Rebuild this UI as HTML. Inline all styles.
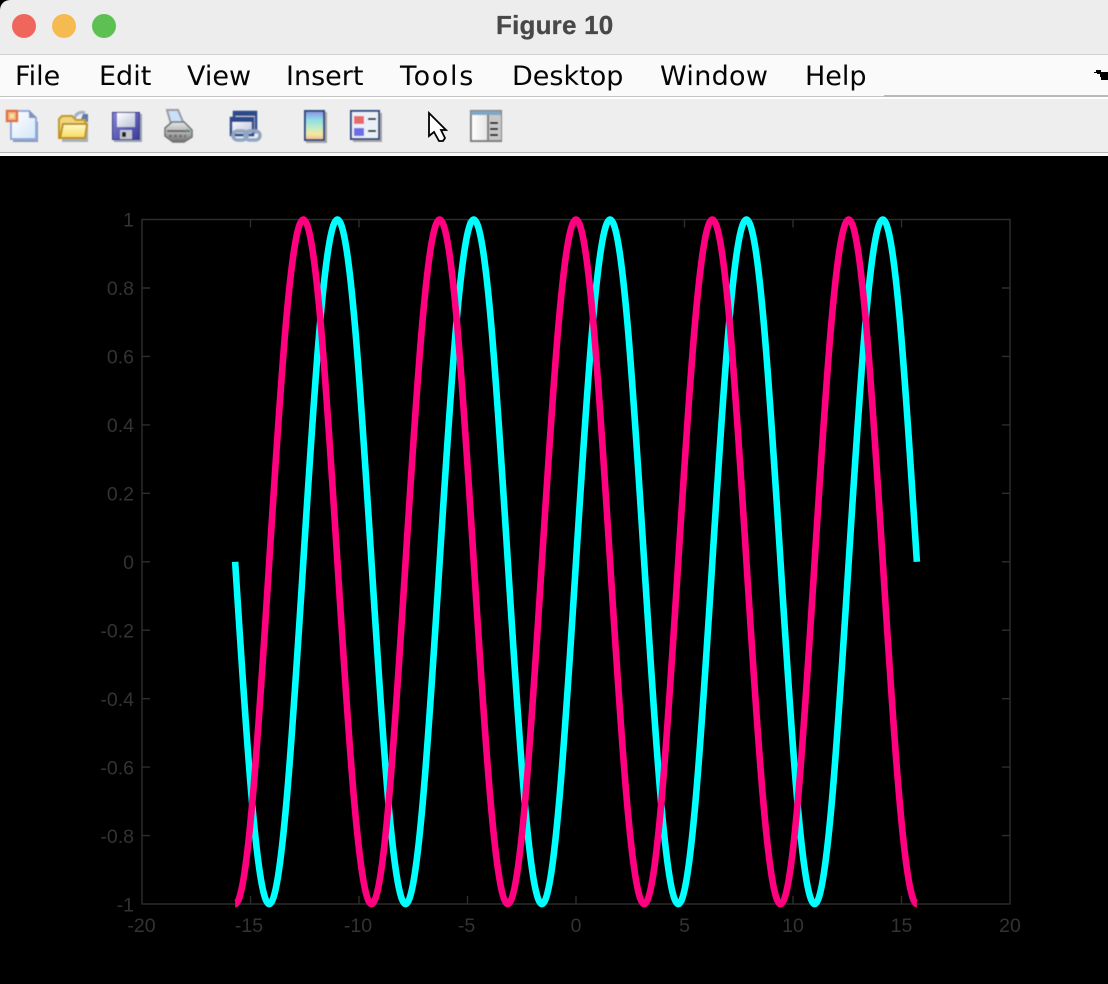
<!DOCTYPE html>
<html lang="en">
<head>
<meta charset="utf-8">
<title>Figure 10</title>
<style>
html,body{margin:0;padding:0;background:#000;}
#w{position:relative;width:1108px;height:984px;overflow:hidden;background:#000;}
#w>div{position:absolute;}
.m{position:absolute;top:59px;font:27px/36px "DejaVu Sans",sans-serif;color:#050505;white-space:nowrap;}
svg{position:absolute;left:0;top:0;}
</style>
</head>
<body>
<div id="w">
<div style="left:0;top:0;width:1108px;height:54px;background:#ecedec;border-top-left-radius:10px;"></div>
<div style="left:0;top:54px;width:1108px;height:1px;background:#cfcfcf;"></div>
<div style="left:0;top:55px;width:1108px;height:41px;background:#fafafa;"></div>
<div style="left:0;top:96px;width:1108px;height:1px;background:#c4c4c4;"></div>
<div style="left:884px;top:95px;width:224px;height:2px;background:#b8b8b8;"></div>
<div style="left:0;top:97px;width:1108px;height:2px;background:#fff;"></div>
<div style="left:0;top:99px;width:1108px;height:53px;background:#eeeeee;"></div>
<div style="left:0;top:152px;width:1108px;height:1px;background:#b4b4b4;"></div>
<div style="left:0;top:153px;width:1108px;height:3px;background:#fbfbfb;"></div>

<div style="left:12px;top:14px;width:24px;height:24px;border-radius:50%;background:#ef665d;"></div>
<div style="left:52px;top:14px;width:24px;height:24px;border-radius:50%;background:#f5ba50;"></div>
<div style="left:92px;top:14px;width:24px;height:24px;border-radius:50%;background:#5cc152;"></div>
<div style="left:496px;top:10px;font:bold 26px/30px 'Liberation Sans',sans-serif;letter-spacing:.2px;color:#484848;white-space:nowrap;-webkit-text-stroke:.3px #484848;">Figure 10</div>

<span class="m" style="left:15px;">File</span>
<span class="m" style="left:99px;">Edit</span>
<span class="m" style="left:187px;">View</span>
<span class="m" style="left:286px;">Insert</span>
<span class="m" style="left:400px;letter-spacing:1.700px;">Tools</span>
<span class="m" style="left:512px;">Desktop</span>
<span class="m" style="left:660px;letter-spacing:.3px;">Window</span>
<span class="m" style="left:805px;">Help</span>

<svg width="1108" height="984" viewBox="0 0 1108 984">
<defs>
<linearGradient id="pg" x1="0" y1="0" x2="1" y2="1"><stop offset="0" stop-color="#fff"/><stop offset="1" stop-color="#d4e6f8"/></linearGradient>
<linearGradient id="fo" x1="0" y1="0" x2="0" y2="1"><stop offset="0" stop-color="#fffbc8"/><stop offset="1" stop-color="#f8d860"/></linearGradient>
<linearGradient id="sv" x1="0" y1="0" x2="1" y2="1"><stop offset="0" stop-color="#8585dc"/><stop offset="1" stop-color="#3c3c96"/></linearGradient>
<linearGradient id="la" x1="0" y1="0" x2="1" y2="1"><stop offset="0" stop-color="#fff"/><stop offset="1" stop-color="#b8c2d8"/></linearGradient>
<linearGradient id="cb" x1="0" y1="0" x2="0" y2="1"><stop offset="0" stop-color="#8d8fe0"/><stop offset=".3" stop-color="#8fdde8"/><stop offset=".6" stop-color="#c5ecc0"/><stop offset=".8" stop-color="#f5e8a0"/><stop offset="1" stop-color="#f0b890"/></linearGradient>
<linearGradient id="pn" x1="0" y1="0" x2="1" y2="0"><stop offset="0" stop-color="#fff"/><stop offset="1" stop-color="#cfcfcf"/></linearGradient>
<linearGradient id="pr" x1="0" y1="0" x2="0" y2="1"><stop offset="0" stop-color="#e4e6e6"/><stop offset=".6" stop-color="#a8aaaa"/><stop offset="1" stop-color="#6e6e6e"/></linearGradient>
<filter id="bl" x="-5%" y="-5%" width="110%" height="110%"><feGaussianBlur stdDeviation=".45"/></filter>
</defs>

<g filter="url(#bl)">
<!-- new file -->
<path d="M13 114H30L38 122V142H13Z" fill="#8f9ab8"/>
<path d="M11 111H29L36 118V139H11Z" fill="url(#pg)" stroke="#8eabdc" stroke-width="2"/>
<path d="M29 110V118H37Z" fill="#8290bf"/>
<rect x="7" y="111" width="10" height="10" fill="#f2b98f" stroke="#e2703c" stroke-width="2.400"/>
<rect x="10" y="114" width="4" height="4" fill="#f5e58c"/>

<!-- open folder -->
<path d="M74 119C76 113 81 111 85 113" fill="none" stroke="#a3b1c6" stroke-width="3"/>
<path d="M83 114H88V122H80Z" fill="#5f7aa6"/>
<path d="M62 124H88V142H62Z" fill="#a9b0b4"/>
<path d="M59 119V138H85V120H76L72 116H62Z" fill="#eed67e" stroke="#c39a20" stroke-width="2"/>
<path d="M63 124H87L85 138H60Z" fill="url(#fo)" stroke="#bd9218" stroke-width="2"/>

<!-- save -->
<rect x="114" y="114" width="28" height="28" fill="#9aa3b4"/>
<path d="M112 112H140V139H112Z" fill="url(#sv)"/>
<rect x="112.500" y="112.500" width="27" height="27" fill="none" stroke="#33337f"/>
<rect x="117" y="113" width="18" height="14" fill="url(#la)"/>
<rect x="120" y="130" width="12" height="9" fill="#c5c5d0"/>
<rect x="122" y="132" width="4" height="5" fill="#222"/>

<!-- print -->
<path d="M167 110H178L184 124H171Z" fill="#c8e0f8" stroke="#9a9aa0" stroke-width="2"/>
<path d="M165 128L172 122H184L192 130V137L184 142H173L165 136Z" fill="url(#pr)" stroke="#6f6f6f" stroke-width="1.500"/>
<path d="M167 131H190" stroke="#666" stroke-width="2"/>
<path d="M169 136H186" stroke="#707070" stroke-width="2.500" stroke-dasharray="3 2"/>
<rect x="186" y="129" width="2" height="2" fill="#5fae6a"/>

<!-- link -->
<rect x="234" y="112" width="22" height="20" fill="#e4e8ef" stroke="#2e4a8a" stroke-width="2.500"/>
<path d="M234 114H256" stroke="#2e4a8a" stroke-width="4"/>
<rect x="231" y="118" width="22" height="17" fill="url(#la)" stroke="#2e4a8a" stroke-width="2.500"/>
<path d="M231 120H253" stroke="#2e4a8a" stroke-width="4"/>
<rect x="233" y="131" width="14" height="9" rx="4.500" fill="none" stroke="#92a6c2" stroke-width="3.500"/>
<rect x="245" y="131" width="15" height="9" rx="4.500" fill="none" stroke="#92a6c2" stroke-width="3.500"/>

<!-- colorbar -->
<rect x="306" y="112" width="21" height="31" fill="#a5a5a5"/>
<rect x="305" y="111" width="19" height="29" fill="url(#cb)" stroke="#2e4a82" stroke-width="2"/>

<!-- legend -->
<rect x="353" y="113" width="29" height="29" fill="#a5a5a5"/>
<rect x="351" y="111" width="28" height="28" fill="#eaf0f8" stroke="#2e4a82" stroke-width="2"/>
<rect x="354" y="116" width="10" height="8" fill="#e96a6a"/>
<rect x="354" y="128" width="10" height="8" fill="#6d6de8"/>
<rect x="368" y="118" width="8" height="2" fill="#000"/>
<rect x="368" y="130" width="8" height="2" fill="#000"/>

<!-- panel -->
<rect x="471" y="111" width="30" height="30" fill="url(#pn)" stroke="#7d7d7d" stroke-width="2"/>
<rect x="471" y="111" width="30" height="4" fill="#7fa6c4"/>
<rect x="487" y="115" width="14" height="25" fill="#c8c8c8"/>
<rect x="487" y="115" width="2" height="25" fill="#7d7d7d"/>
<rect x="490" y="122" width="8" height="2" fill="#000"/>
<rect x="490" y="128" width="8" height="2" fill="#000"/>
<rect x="490" y="134" width="8" height="2" fill="#000"/>
</g>

<!-- pointer -->
<path d="M429 113V136L434 132L439 141H443L445 138L441 130H446Z" fill="#fff" stroke="#000" stroke-width="1.800" stroke-linejoin="miter"/>

<!-- overflow arrow -->
<path d="M1094 72H1096V70H1101V72H1108V80H1101V77H1100V74H1097V73H1094Z" fill="#000"/>

<!-- axes box and ticks -->
<g fill="none" stroke="#2e2e2e" stroke-width="1.400">
<rect x="142" y="219.500" width="868" height="684.500"/>
<path d="M250.500 219.500v8M359 219.500v8M467.500 219.500v8M576 219.500v8M684.500 219.500v8M793 219.500v8M901.500 219.500v8"/>
<path d="M250.500 904v-8M359 904v-8M467.500 904v-8M576 904v-8M684.500 904v-8M793 904v-8M901.500 904v-8"/>
<path d="M142 288h8M142 356.400h8M142 424.900h8M142 493.300h8M142 561.800h8M142 630.200h8M142 698.700h8M142 767.100h8M142 835.600h8"/>
<path d="M1010 288h-8M1010 356.400h-8M1010 424.900h-8M1010 493.300h-8M1010 561.800h-8M1010 630.200h-8M1010 698.700h-8M1010 767.100h-8M1010 835.600h-8"/>
</g>

<!-- tick labels -->
<g font-family="'Liberation Sans',sans-serif" font-size="19.500" fill="#333" text-anchor="end">
<text x="134" y="226.500">1</text>
<text x="134" y="295">0.8</text>
<text x="134" y="363.500">0.6</text>
<text x="134" y="432">0.4</text>
<text x="134" y="500.500">0.2</text>
<text x="134" y="569">0</text>
<text x="134" y="637.500">-0.2</text>
<text x="134" y="706">-0.4</text>
<text x="134" y="774.500">-0.6</text>
<text x="134" y="843">-0.8</text>
<text x="134" y="911.500">-1</text>
</g>
<g font-family="'Liberation Sans',sans-serif" font-size="19.500" fill="#333" text-anchor="middle">
<text x="141.500" y="932">-20</text>
<text x="249" y="932">-15</text>
<text x="358" y="932">-10</text>
<text x="466.500" y="932">-5</text>
<text x="576" y="932">0</text>
<text x="684.500" y="932">5</text>
<text x="793" y="932">10</text>
<text x="901.500" y="932">15</text>
<text x="1010" y="932">20</text>
</g>

<!-- curves -->
<g transform="translate(576 561.800) scale(21.700 -342.250)" fill="none" stroke-linejoin="round">
<path vector-effect="non-scaling-stroke" stroke="#00ffff" stroke-width="6.600" d="M-15.708 0
c.5123 -.5123 1.0023 -1 1.5708 -1c.5685 0 1.0585 .4877 1.5708 1c.5123 .5123 1.0023 1 1.5708 1c.5685 0 1.0585 -.4877 1.5708 -1
c.5123 -.5123 1.0023 -1 1.5708 -1c.5685 0 1.0585 .4877 1.5708 1c.5123 .5123 1.0023 1 1.5708 1c.5685 0 1.0585 -.4877 1.5708 -1
c.5123 -.5123 1.0023 -1 1.5708 -1c.5685 0 1.0585 .4877 1.5708 1c.5123 .5123 1.0023 1 1.5708 1c.5685 0 1.0585 -.4877 1.5708 -1
c.5123 -.5123 1.0023 -1 1.5708 -1c.5685 0 1.0585 .4877 1.5708 1c.5123 .5123 1.0023 1 1.5708 1c.5685 0 1.0585 -.4877 1.5708 -1
c.5123 -.5123 1.0023 -1 1.5708 -1c.5685 0 1.0585 .4877 1.5708 1c.5123 .5123 1.0023 1 1.5708 1c.5685 0 1.0585 -.4877 1.5708 -1"/>
<path vector-effect="non-scaling-stroke" stroke="#ff0080" stroke-width="6.600" d="M-15.708 -1
c.5685 0 1.0585 .4877 1.5708 1c.5123 .5123 1.0023 1 1.5708 1c.5685 0 1.0585 -.4877 1.5708 -1c.5123 -.5123 1.0023 -1 1.5708 -1
c.5685 0 1.0585 .4877 1.5708 1c.5123 .5123 1.0023 1 1.5708 1c.5685 0 1.0585 -.4877 1.5708 -1c.5123 -.5123 1.0023 -1 1.5708 -1
c.5685 0 1.0585 .4877 1.5708 1c.5123 .5123 1.0023 1 1.5708 1c.5685 0 1.0585 -.4877 1.5708 -1c.5123 -.5123 1.0023 -1 1.5708 -1
c.5685 0 1.0585 .4877 1.5708 1c.5123 .5123 1.0023 1 1.5708 1c.5685 0 1.0585 -.4877 1.5708 -1c.5123 -.5123 1.0023 -1 1.5708 -1
c.5685 0 1.0585 .4877 1.5708 1c.5123 .5123 1.0023 1 1.5708 1c.5685 0 1.0585 -.4877 1.5708 -1c.5123 -.5123 1.0023 -1 1.5708 -1"/>
</g>
</svg>
</div>
</body>
</html>
